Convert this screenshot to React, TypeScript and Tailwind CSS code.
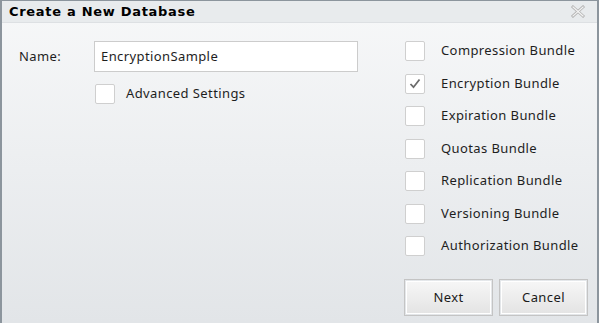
import React from "react";

const font = { fontFamily: '"Noto Sans", "Open Sans", sans-serif', letterSpacing: "0.4px" };

function Box({ checked }: { checked?: boolean }) {
  return (
    <div className="w-[20px] h-[20px] shrink-0 rounded-[2px] border border-[#cfcfcf] bg-white flex items-center justify-center">
      {checked && (
        <svg width="12" height="11" viewBox="0 0 12 11">
          <path d="M1.5 6 L4.5 9.2 L10.5 1.5" fill="none" stroke="#6b6b6b" strokeWidth="1.8" />
        </svg>
      )}
    </div>
  );
}

const bundles = [
  "Compression Bundle",
  "Encryption Bundle",
  "Expiration Bundle",
  "Quotas Bundle",
  "Replication Bundle",
  "Versioning Bundle",
  "Authorization Bundle",
];

function Btn({ label }: { label: string }) {
  return (
    <div className="w-[89px] h-[37px] border border-[#c4c4c4] p-px">
      <div className="w-full h-full border border-white bg-gradient-to-b from-[#f6f6f6] to-[#e4e4e4] flex items-center justify-center text-[13px] text-[#1a1a1a]">
        {label}
      </div>
    </div>
  );
}

export default function App() {
  return (
    <div
      className="w-[599px] h-[323px] border-l-2 border-r-2 border-t border-[#8c959d] flex flex-col bg-gradient-to-b from-[#f7f8f9] to-[#e2e5e8] text-[#1e1e1e]"
      style={font}
    >
      <div className="h-[22px] shrink-0 bg-[#e8ebed] border-b border-[#dde0e3] flex items-center justify-between pl-[7px] pr-[12px]">
        <span
          className="font-bold text-black"
          style={{ fontFamily: '"DejaVu Sans", Verdana, sans-serif', fontSize: "13px", letterSpacing: "0.7px" }}
        >
          Create a New Database
        </span>
        <svg width="14" height="13" viewBox="0 0 14 13">
          <path d="M2 2 L12 11 M12 2 L2 11" stroke="#b5b5b5" strokeWidth="3" strokeLinecap="square" />
          <path d="M2 2 L12 11 M12 2 L2 11" stroke="#f4f4f4" strokeWidth="1.2" strokeLinecap="square" />
        </svg>
      </div>
      <div className="flex flex-1 pt-[18px]">
        <div className="w-[403px] pl-[17px] flex flex-col">
          <div className="flex items-center h-[31px]">
            <span className="w-[75px] text-[13px]">Name:</span>
            <div className="w-[264px] h-[31px] border border-[#cccccc] bg-white flex items-center pl-[6px] text-[13px]">
              EncryptionSample
            </div>
          </div>
          <div className="flex items-center gap-[11px] mt-[12px] ml-[76px]">
            <Box />
            <span className="text-[13px]">Advanced Settings</span>
          </div>
        </div>
        <div className="flex flex-col">
          <div className="flex flex-col gap-[12.5px]">
            {bundles.map((b, i) => (
              <div key={b} className="flex items-center gap-[16px] h-[20px]">
                <Box checked={i === 1} />
                <span className="text-[13px]">{b}</span>
              </div>
            ))}
          </div>
          <div className="flex gap-[6px] mt-[23px] -ml-px">
            <Btn label="Next" />
            <Btn label="Cancel" />
          </div>
        </div>
      </div>
    </div>
  );
}
